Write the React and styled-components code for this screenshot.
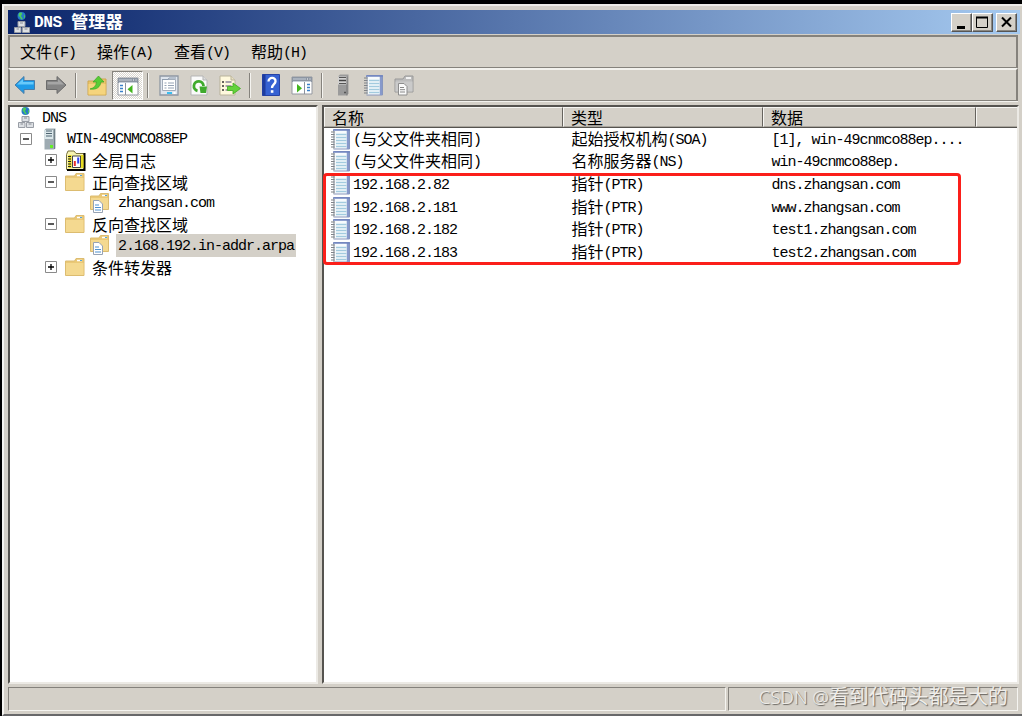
import React from 'react';
import styled, { createGlobalStyle, css } from 'styled-components';

const TREE = [
  { label: 'DNS', icon: 'root', level: 0 },
  { label: 'WIN-49CNMCO88EP', icon: 'server', level: 1, toggle: '-' },
  { label: '全局日志', icon: 'log', level: 2, toggle: '+' },
  { label: '正向查找区域', icon: 'folder', level: 2, toggle: '-' },
  { label: 'zhangsan.com', icon: 'zone', level: 3 },
  { label: '反向查找区域', icon: 'folder', level: 2, toggle: '-' },
  { label: '2.168.192.in-addr.arpa', icon: 'zone', level: 3, selected: true },
  { label: '条件转发器', icon: 'folder', level: 2, toggle: '+' }
];

const RECORDS = [
  ['(与父文件夹相同)', '起始授权机构(SOA)', '[1], win-49cnmco88ep....'],
  ['(与父文件夹相同)', '名称服务器(NS)', 'win-49cnmco88ep.'],
  ['192.168.2.82', '指针(PTR)', 'dns.zhangsan.com'],
  ['192.168.2.181', '指针(PTR)', 'www.zhangsan.com'],
  ['192.168.2.182', '指针(PTR)', 'test1.zhangsan.com'],
  ['192.168.2.183', '指针(PTR)', 'test2.zhangsan.com']
];

const MENU = ['文件(F)', '操作(A)', '查看(V)', '帮助(H)'];

const TOOLS = [
  ['back', 'forward'],
  ['up', 'paneLeft'],
  ['properties', 'refresh', 'export'],
  ['help', 'paneRight'],
  ['serverGrey', 'record', 'zoneGrey']
];

const ICONS = {
  back: {
    w: 22,
    h: 20,
    draw: (
      <>
        <path d="M1 10 10 1.5V5.500h10.500v9H10v4z" fill="#1e9be8" stroke="#4a7da8" />
        <path d="M3 9.5 9 4v3h10.5v2.5z" fill="#67c9fa" />
      </>
    )
  },
  forward: {
    w: 22,
    h: 20,
    draw: (
      <>
        <path d="M21 10 12 1.5V5.500H1.500v9H12v4z" fill="#858585" stroke="#6c6c6c" />
        <path d="M19 9.5 13 4v3H2.5v2.5z" fill="#a6a6a6" />
      </>
    )
  },
  up: {
    w: 20,
    h: 21,
    draw: (
      <>
        <path d="M1 6h7l2-2h9v16H1z" fill="#eac46a" stroke="#cfa750" />
        <path d="M1.5 9h17v10.5h-17z" fill="#f5d47d" />
        <path
          d="M3 14c4-1 6-3 6.500-7H6l5.500-6L17 7h-3c-1 5-4 8-11 7z"
          fill="#59cc35"
          stroke="#3ca524"
          strokeWidth=".7"
        />
      </>
    )
  },
  paneLeft: {
    w: 22,
    h: 20,
    draw: (
      <>
        <path d="M1 2h20v17H1z" fill="#fff" stroke="#9498a0" />
        <path d="M1 2h20v5H1z" fill="#8c95a2" />
        <path d="M2 4h13M2 6.500h18" stroke="#c8d0da" />
        <path d="M16 4h1M18.500 4h1" stroke="#fff" />
        <path d="M3 9.500h3M3 12.500h3M3 15.500h3" stroke="#3b82ca" strokeWidth="1.600" />
        <path d="M8.500 7v12" stroke="#8b929e" />
        <path d="m15.500 9-5 4.200 5 4.300z" fill="#43b51e" />
      </>
    )
  },
  paneRight: {
    w: 22,
    h: 20,
    draw: (
      <>
        <path d="M1 2h20v17H1z" fill="#fff" stroke="#9498a0" />
        <path d="M1 2h20v5H1z" fill="#8c95a2" />
        <path d="M2 4h13M2 6.500h18" stroke="#c8d0da" />
        <path d="M16 4h1M18.500 4h1" stroke="#fff" />
        <path d="M16 9.500h3M16 12.500h3M16 15.500h3" stroke="#3b82ca" strokeWidth="1.600" />
        <path d="M13.500 7v12" stroke="#8b929e" />
        <path d="m6 9 5 4.200-5 4.300z" fill="#43b51e" />
      </>
    )
  },
  properties: {
    w: 20,
    h: 21,
    draw: (
      <>
        <path d="M1 1h18v19H1z" fill="#dfe5ed" stroke="#8e97a3" strokeWidth="1.300" />
        <path d="M3.500 4.500h13v11h-13z" fill="#fff" stroke="#a3adba" />
        <path d="M3 4.500h6l1-1.500h7" stroke="#8e9cae" fill="none" />
        <path
          d="M5.500 8h2M9 8h6M5.500 10.500h2M9 10.500h6M5.500 13h2M9 13h6"
          stroke="#95a3b5"
        />
        <path d="M8 18h5" stroke="#38bdf0" strokeWidth="2" />
        <path d="M14.500 18h2" stroke="#fff" strokeWidth="2" />
      </>
    )
  },
  refresh: {
    w: 18,
    h: 21,
    draw: (
      <>
        <path d="M1 1h12l4 4v15H1z" fill="#fafafa" stroke="#b5b5b5" />
        <path d="M13 1v4h4" fill="#ddd" stroke="#b5b5b5" />
        <path
          d="M7.500 15.800a4.800 4.800 0 1 1 6-4.800"
          fill="none"
          stroke="#3faa2d"
          strokeWidth="2.800"
        />
        <path d="M9.500 11.500h7.500l-1 6.500h-5.500z" fill="#3faa2d" />
      </>
    )
  },
  export: {
    w: 22,
    h: 21,
    draw: (
      <>
        <path d="M1 1h11l4 4v15H1z" fill="#fff9dd" stroke="#b9b39b" />
        <path d="M12 1v4h4" fill="#e8e0c2" stroke="#b9b39b" />
        <path d="M3 7h2M3 11h2M3 15h2" stroke="#333" strokeWidth="1.500" />
        <path d="M6.500 7h6M6.500 11h6M6.500 15h6" stroke="#8a8499" strokeWidth="1.500" />
        <path
          d="M8.500 11.500H14V8l7.500 5.500L14 19v-3.500H8.500z"
          fill="#63d33b"
          stroke="#3fac20"
          strokeWidth=".8"
        />
      </>
    )
  },
  help: {
    w: 18,
    h: 22,
    draw: (
      <>
        <path d="M.500.500h17v21H.500z" fill="#3561d2" stroke="#2743a5" />
        <path d="M.500.500h3v21h-3z" fill="#1e3c9f" />
        <path
          d="M6.500 7.500c0-5 7.500-4.500 7 0-.300 3-3.500 3-3.500 6.500"
          fill="none"
          stroke="#fff"
          strokeWidth="2.300"
        />
        <path d="M8.800 16.200h2.600v2.600H8.800z" fill="#fff" />
      </>
    )
  },
  serverGrey: {
    w: 12,
    h: 22,
    draw: (
      <>
        <path d="M1 2.500 3 .500h8.500v19l-2 2H1z" fill="#9b9b9b" />
        <path d="M1 2.500h9v8H1z" fill="#d2d2d2" />
        <path d="M2 3.500h7M2 9.500h7" stroke="#555" />
        <path d="M2 6.500h7" stroke="#444" strokeWidth="1.500" />
        <path d="M10 2.500v19" stroke="#777" />
        <path d="M7 18.500h2" stroke="#555" strokeWidth="1.500" />
      </>
    )
  },
  record: {
    w: 19,
    h: 21,
    draw: (
      <>
        <path d="M2.500.500h16v19.500h-16z" fill="#f7fbfd" stroke="#8795bb" />
        <path d="M17 1v19" stroke="#8799cb" strokeWidth="2.500" />
        <path d="M2.500 1h16.500" stroke="#6f84c0" strokeWidth="1.500" />
        <path
          d="M5 5.500h10.500M5 8.500h10.500M5 11.500h10.500M5 14.500h10.500M5 17.500h10.500"
          stroke="#a3cbdf"
          strokeWidth="1.500"
        />
        <path d="M3 2v18" stroke="#b9bfc6" strokeWidth="2" />
        <path
          d="M0 3h3.500M0 5.500h3.500M0 8h3.500M0 10.500h3.500M0 13h3.500M0 15.500h3.500M0 18h3.500"
          stroke="#808388"
          strokeWidth="1.200"
        />
      </>
    )
  },
  zoneGrey: {
    w: 20,
    h: 21,
    draw: (
      <>
        <path d="M1 4h8l2-3h8v16H1z" fill="#bcbcbc" stroke="#999" />
        <path d="M12 3h5" stroke="#f2f2f2" strokeWidth="2" />
        <path d="M1.500 6.500h17v10h-17z" fill="#cacaca" />
        <path d="M4.500 8.500H10l3 3v8.500H4.500z" fill="#fafafa" stroke="#8d8d8d" />
        <path d="M6 12.500h4M6 14.700h5M6 17h5" stroke="#888" />
      </>
    )
  },
  root: {
    w: 16,
    h: 21,
    draw: (
      <>
        <circle cx="7.500" cy="4" r="4" fill="#2679c8" />
        <path d="M5 1c3-1 4 0 2.500 2S9 5 8.500 7.500C6 7.500 7 5 4.500 4z" fill="#4ccd5c" />
        <path d="M10 2.500c1.500 1 1.500 3 0 4z" fill="#48c85b" />
        <path
          d="M4 9.500h7v5H4zM.500 15.500h6.500v5H.500zM8.500 15.500h7v5h-7z"
          fill="#dde0e4"
          stroke="#989da5"
        />
        <path d="M6 11h3M2.500 17h2.500M10.500 17h3" stroke="#888d95" />
      </>
    )
  },
  server: {
    w: 12,
    h: 22,
    draw: (
      <>
        <path d="M.500 2 2 .500h9.500v20L10 21.500H.500z" fill="#9eabb2" />
        <path d="M.500 2H9v9H.500z" fill="#dbe7ea" />
        <path d="M2 3h6M2 5.500h6M2 8h6" stroke="#4d6370" />
        <path d="M10.500 1v20" stroke="#718087" />
        <path d="M6 18.500h3" stroke="#65ee27" strokeWidth="3" />
      </>
    )
  },
  log: {
    w: 21,
    h: 21,
    draw: (
      <>
        <path d="M1.500 4.500 3 1h6l2 2.500h8v16h-17.500z" fill="#f7f3b0" stroke="#77713d" />
        <path d="M19.500 3v17H2" fill="none" stroke="#000" strokeWidth="2" />
        <path d="M5 5v13M17 5v13" stroke="#e8dc20" strokeWidth="3" />
        <path d="M7.500 6h8v11.500h-8z" fill="#fff" stroke="#444" />
        <path d="M3 6.500h3M3 9h3M3 11.500h3M3 14h3M3 16.500h3" stroke="#222" />
        <path d="M9.800 11v5" stroke="#e9302b" strokeWidth="2" />
        <path d="M13.200 7.500v6" stroke="#3041eb" strokeWidth="2" />
      </>
    )
  },
  folder: {
    w: 20,
    h: 18,
    draw: (
      <>
        <path d="M.500 3h9l1.500-2.500h8v17H.500z" fill="#eac876" stroke="#dcbc70" />
        <path d="M12 2.500h5" stroke="#fff" strokeWidth="1.500" />
        <path d="M15 2.500h2" stroke="#54a5dc" />
        <path d="M1 5h17.500v12H1z" fill="#f4d990" />
      </>
    )
  },
  zone: {
    w: 19,
    h: 20,
    draw: (
      <>
        <path d="M.500 3h8.500l1.500-2.500h8v16H.500z" fill="#eac876" stroke="#dcbc70" />
        <path d="M12 2.500h5" stroke="#fff" strokeWidth="1.500" />
        <path d="M15 2.500h2" stroke="#54a5dc" />
        <path d="M1 5h17v11H1z" fill="#f4d990" />
        <path d="M3.500 7.500H9l3.500 3.500v8.500h-9z" fill="#fff" stroke="#97a3b4" />
        <path d="M5 12h4M5 14.500h6M5 17h6" stroke="#4e91cf" />
      </>
    )
  }
};

function Icon({ name }) {
  const { w, h, draw } = ICONS[name];

  return (
    <svg width={w} height={h} viewBox={`0 0 ${w} ${h}`}>
      {draw}
    </svg>
  );
}

// Latin runs take half-width cells beside the full-width characters.
function Label({ children }) {
  return children
    .split(/([\x20-\x7e]+)/)
    .filter(Boolean)
    .map((run, i) => (/^[\x20-\x7e]/.test(run) ? <Latin key={i}>{run}</Latin> : run));
}

export default function App() {
  return (
    <>
      <GlobalStyle />
      <Window>
        <TitleBar>
          <Icon name="root" />
          <Title>
            <Label>DNS 管理器</Label>
          </Title>
          <WindowButton>
            <svg width="19" height="17">
              <path d="M5 13.500h8" stroke="#000" strokeWidth="3" />
            </svg>
          </WindowButton>
          <WindowButton>
            <svg width="19" height="17">
              <path d="M3.500 3.500h11v10h-11z" fill="none" stroke="#000" />
              <path d="M3 3.500h12" stroke="#000" strokeWidth="2" />
            </svg>
          </WindowButton>
          <WindowButton $apart>
            <svg width="19" height="17">
              <path d="m5 3.500 9 9m0-9-9 9" stroke="#000" strokeWidth="2" />
            </svg>
          </WindowButton>
        </TitleBar>
        <Bars>
          <MenuBar>
            {MENU.map(item => (
              <span key={item}>
                <Label>{item}</Label>
              </span>
            ))}
          </MenuBar>
          <ToolBar>
            {TOOLS.map((group, i) => (
              <React.Fragment key={group[0]}>
                {i > 0 && <Separator />}
                {group.map(name => (
                  <Tool key={name} $pressed={name === 'paneLeft'}>
                    <Icon name={name} />
                  </Tool>
                ))}
              </React.Fragment>
            ))}
          </ToolBar>
        </Bars>
        <Panes>
          <TreePane>
            {TREE.map(node => (
              <TreeRow key={node.label} $level={node.level}>
                {node.toggle && (
                  <Toggle>
                    <svg width="12" height="12">
                      <path d="M.500.500h11v11H.500z" fill="#fff" stroke="#8a8a8a" />
                      <path
                        d={node.toggle === '+' ? 'M3 6h6M6 3v6' : 'M3 6h6'}
                        stroke="#000"
                        strokeWidth="1.300"
                      />
                    </svg>
                  </Toggle>
                )}
                <NodeIcon $level={node.level}>
                  <Icon name={node.icon} />
                </NodeIcon>
                <NodeText $selected={node.selected}>
                  <Label>{node.label}</Label>
                </NodeText>
              </TreeRow>
            ))}
          </TreePane>
          <ListPane>
            <Columns>
              {['名称', '类型', '数据', ''].map(name => (
                <ColumnHead key={name}>{name}</ColumnHead>
              ))}
            </Columns>
            {RECORDS.map(([name, type, data]) => (
              <RecordRow key={type + data}>
                <NameCell>
                  <Icon name="record" />
                  <span>
                    <Label>{name}</Label>
                  </span>
                </NameCell>
                <Cell>
                  <Label>{type}</Label>
                </Cell>
                <Cell>
                  <Label>{data}</Label>
                </Cell>
              </RecordRow>
            ))}
            <Highlight />
          </ListPane>
        </Panes>
        <StatusBar>
          <StatusPart />
          <StatusPart />
          <StatusPart />
          <Watermark>
            <span>CSDN @</span>看到代码头都是大的
          </Watermark>
        </StatusBar>
      </Window>
    </>
  );
}

const GlobalStyle = createGlobalStyle`
  * {
    box-sizing: border-box;
  }

  body {
    margin: 0;
    background: #000;
    overflow: hidden;
  }

  svg {
    display: block;
    flex-shrink: 0;
  }
`;

const etched = css`
  border: 2px solid;
  border-color: #85827c #efede8 #efede8 #85827c;
`;

const Window = styled.div`
  display: flex;
  flex-direction: column;
  width: 1020px;
  height: 712px;
  margin: 4px 0 0 2px;
  padding: 4px 2px 1px 4px;
  border: 2px solid;
  border-color: #eeece8 #d4d0c8 #68686a #f5f4f1;
  border-right: 0;
  background: #d4d0c8;
  color: #000;
  font: 16px/20px 'Noto Sans CJK SC', sans-serif;
  white-space: pre;
`;

const Latin = styled.span`
  font-family: 'Liberation Mono', monospace;
  font-size: 0.9375em;
  letter-spacing: -1px;
  vertical-align: 1px;
`;

const TitleBar = styled.div`
  display: flex;
  align-items: center;
  height: 24px;
  padding: 0 3px 0 6px;
  background: linear-gradient(90deg, #0a246a, #a6caf0);
`;

const Title = styled.div`
  flex: 1;
  margin-left: 4px;
  color: #fff;
  font-size: 17.3px;
  font-weight: bold;

  ${Latin} {
    letter-spacing: -0.5px;
  }
`;

const WindowButton = styled.div`
  width: 21px;
  height: 19px;
  margin-left: ${props => (props.$apart ? 3 : 0)}px;
  border: 1px solid;
  border-color: #fff #555 #555 #fff;
  box-shadow: inset -1px -1px #8b8882;
  background: #d4d0c8;
`;

const Bars = styled.div`
  margin: 1px 2px 0 0;
`;

const MenuBar = styled.div`
  display: flex;
  align-items: center;
  gap: 21px;
  height: 33px;
  padding: 0 0 0 10px;
  ${etched}
  border-bottom: 1px solid #85827c;
  border-right-color: #85827c;
`;

const ToolBar = styled.div`
  display: flex;
  align-items: center;
  height: 33px;
  border: 2px solid;
  border-color: #f3f2ee #85827c #85827c #85827c;
  border-bottom-width: 1px;
  box-shadow: 0 1px #f3f2ee;
`;

const Tool = styled.div`
  display: flex;
  align-items: center;
  justify-content: center;
  width: 30.6px;
  height: 29px;

  ${props =>
    props.$pressed &&
    css`
      padding-top: 2px;
      border: 1px solid;
      border-color: #85827c #fff #fff #85827c;
      background: repeating-conic-gradient(#fff 0 25%, #d9d5ce 0 50%) 0 0 / 2px 2px;
    `}
`;

const Separator = styled.div`
  width: 2px;
  height: 25px;
  margin: 0 4.25px;
  border-left: 1px solid #85827c;
  border-right: 1px solid #f5f4f0;
`;

const Panes = styled.div`
  display: flex;
  flex: 1;
  gap: 4px;
  margin-top: 4px;
  margin-right: 1px;
`;

const Pane = styled.div`
  border: 2px solid;
  border-color: #55534f #eceae5 #eceae5 #55534f;
  background: #fff;
`;

const TreePane = styled(Pane)`
  width: 310px;
`;

const TreeRow = styled.div`
  display: flex;
  align-items: center;
  height: 21.3px;
  padding-left: ${props => [8, 10, 35, 79][props.$level]}px;
`;

const Toggle = styled.div`
  width: 12px;
`;

const NodeIcon = styled.div`
  width: ${props => [22, 21, 25, 26][props.$level]}px;
  margin-left: ${props => [0, 12, 8, 1][props.$level]}px;
`;

const NodeText = styled.div`
  margin: 0 2px;
  line-height: 20px;

  ${props =>
    props.$selected &&
    css`
      background: #d4d0c8;
      box-shadow: -2px 0 #d4d0c8, 2px 0 #d4d0c8;
    `}
`;

const ListPane = styled(Pane)`
  position: relative;
  flex: 1;
`;

const Columns = styled.div`
  display: grid;
  grid-template-columns: 239px 200px 213px 1fr;
  height: 21px;
  border-bottom: 1px solid #55534f;
`;

const ColumnHead = styled.div`
  padding-left: 7px;
  border: 1px solid;
  border-color: #f7f6f3 #66635e #aaa69e #f7f6f3;
  background: #d4d0c8;
  line-height: 18px;

  &:last-child {
    border-right: 0;
  }
`;

const RecordRow = styled.div`
  display: grid;
  grid-template-columns: 247.5px 200px 1fr;
  align-items: center;
  height: 22.6px;
  line-height: 19px;
`;

const NameCell = styled.div`
  display: flex;
  align-items: center;
  gap: 3px;
  padding-left: 7px;
`;

const Cell = styled.div`
  min-width: 0;
`;

const Highlight = styled.div`
  position: absolute;
  top: 66px;
  left: -1px;
  width: 638px;
  height: 92px;
  border: 3px solid #fb1f1a;
  border-radius: 4px;
`;

const StatusBar = styled.div`
  position: relative;
  display: grid;
  grid-template-columns: 718px 175px 1fr;
  gap: 2px;
  height: 24px;
  margin: 3px 2px 2px 0;
`;

const StatusPart = styled.div`
  border: 1px solid;
  border-color: #85827c #f5f4f0 #f5f4f0 #85827c;
`;

const Watermark = styled.div`
  position: absolute;
  top: -4px;
  right: 10px;
  color: #efede9;
  font-size: 19.9px;
  font-weight: 400;
  line-height: 26px;
  text-shadow: 1px 1px 1px #66635e;

  span {
    font-family: 'Noto Sans', sans-serif;
    font-size: 18.7px;
    font-weight: 300;
  }
`;
